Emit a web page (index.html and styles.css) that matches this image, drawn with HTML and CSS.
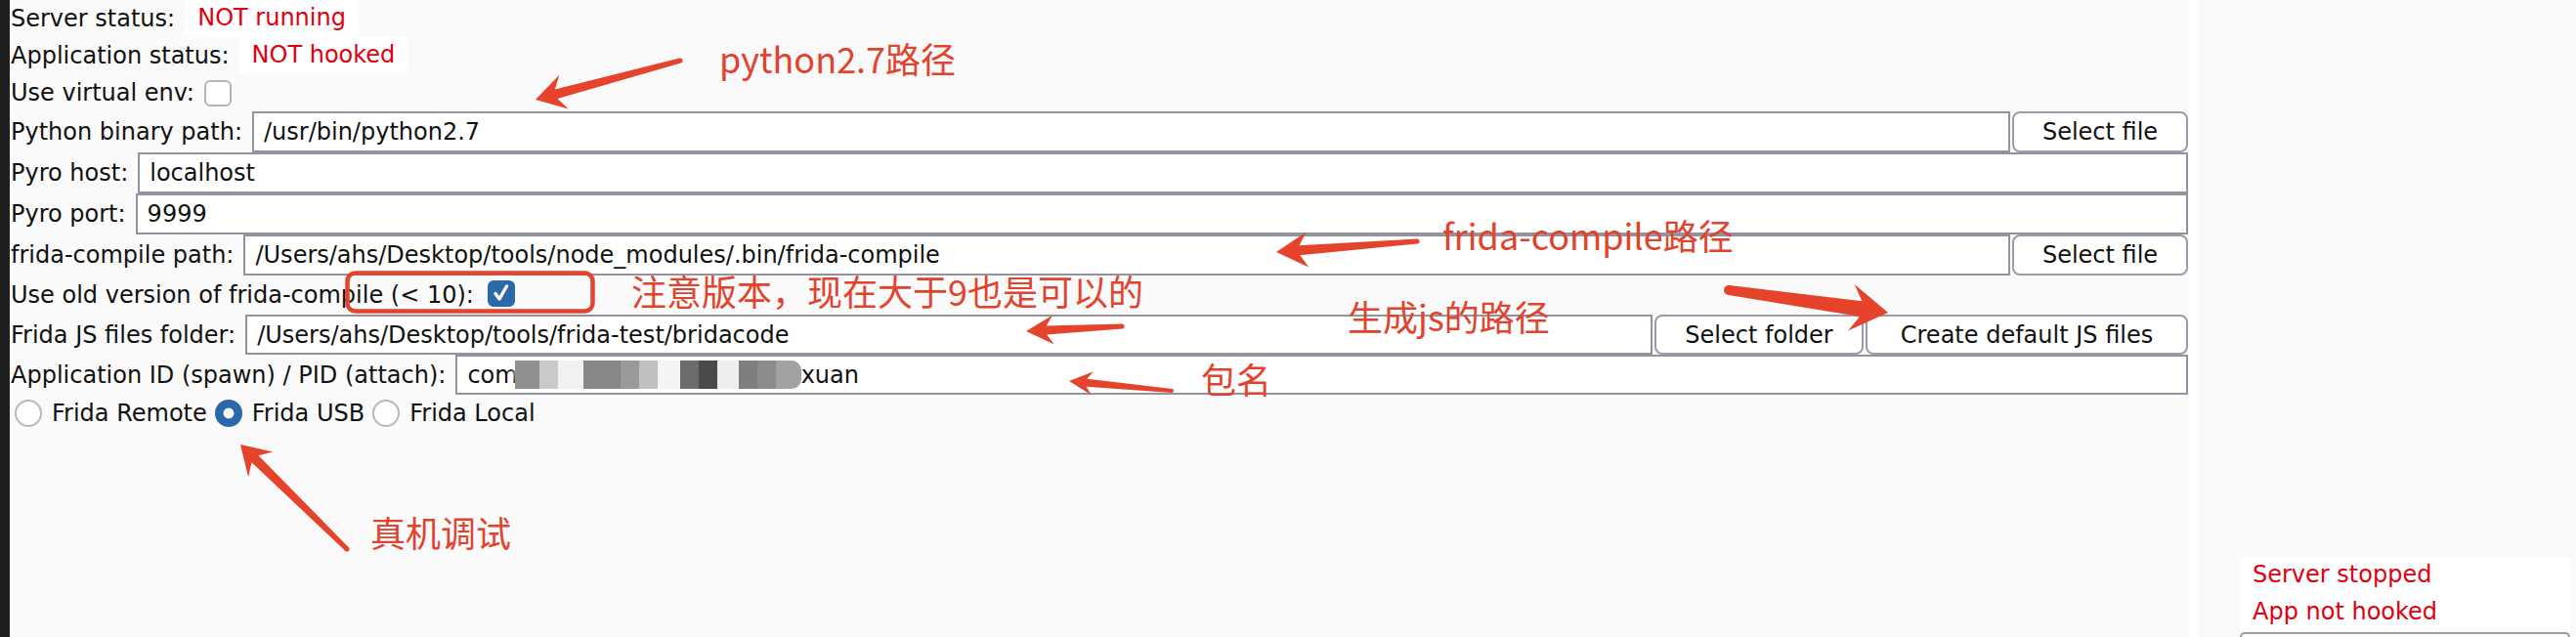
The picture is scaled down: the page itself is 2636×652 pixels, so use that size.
FILE: index.html
```html
<!DOCTYPE html>
<html lang="en">
<head>
<meta charset="utf-8">
<title>Brida configuration</title>
<link rel="stylesheet" href="styles.css">
</head>
<body>
<div class="screen">
  <div class="edge"></div>
  <main class="panel">
    <div class="row r-status"><span class="lbl">Server status:</span><span class="status">NOT running</span></div>
    <div class="row r-status"><span class="lbl">Application status:</span><span class="status">NOT hooked</span></div>
    <div class="row r-check"><span class="lbl">Use virtual env:</span><span class="check"></span></div>
    <div class="row r-field"><span class="lbl">Python binary path:</span>
      <div class="field"><div class="input">/usr/bin/python2.7</div><button class="btn w-file">Select file</button></div></div>
    <div class="row r-field"><span class="lbl">Pyro host:</span>
      <div class="field"><div class="input">localhost</div></div></div>
    <div class="row r-field"><span class="lbl">Pyro port:</span>
      <div class="field"><div class="input">9999</div></div></div>
    <div class="row r-field"><span class="lbl">frida-compile path:</span>
      <div class="field"><div class="input">/Users/ahs/Desktop/tools/node_modules/.bin/frida-compile</div><button class="btn w-file">Select file</button></div></div>
    <div class="row r-check r-old"><span class="lbl">Use old version of frida-compile (&lt; 10):</span><span class="check checked"><svg viewBox="0 0 28 28" width="28" height="28"><path d="M8 14.5 L12 20 L19.5 7" fill="none" stroke="#fff" stroke-width="3.4" stroke-linecap="round" stroke-linejoin="round"/></svg></span></div>
    <div class="row r-field r-short"><span class="lbl">Frida JS files folder:</span>
      <div class="field"><div class="input">/Users/ahs/Desktop/tools/frida-test/bridacode</div><button class="btn w-folder">Select folder</button><button class="btn w-create">Create default JS files</button></div></div>
    <div class="row r-field r-short"><span class="lbl">Application ID (spawn) / PID (attach):</span>
      <div class="field"><div class="input">com<span class="mosaic"><i class="m1"></i><i class="m2"></i><i class="m3"></i><i class="m4"></i><i class="m5"></i><i class="m6"></i><i class="m7"></i><i class="m8"></i><i class="m9"></i><i class="m10"></i><i class="m11"></i><i class="m12"></i><i class="m13"></i></span>xuan</div></div></div>
    <div class="row r-radio">
      <label class="radio"><span class="dot"></span>Frida Remote</label>
      <label class="radio"><span class="dot on"></span>Frida USB</label>
      <label class="radio"><span class="dot"></span>Frida Local</label>
    </div>
  </main>
  <div class="divider"></div>
  <aside class="side">
    <div class="side-status"><div>Server stopped</div><div>App not hooked</div></div>
    <div class="side-btn"></div>
  </aside>

  <svg class="overlay" viewBox="0 0 2636 652" width="2636" height="652">
    <g fill="#e5432b">
      <polygon points="695.35,59.59 567.94,91.43 572.26,76.79 548,102 581.66,111.55 570.54,101.09 696.65,64.41"/>
      <circle cx="696" cy="62" r="2.5"/>
      <polygon points="1449.81,244.51 1329.55,251.18 1336.54,237.61 1306,258 1339.28,273.51 1330.31,261.16 1450.19,249.49"/>
      <circle cx="1450" cy="247" r="2.5"/>
      <polygon points="1147.87,331.5 1070.74,333.44 1077.19,322.59 1050,339 1078.73,352.55 1071.2,342.42 1148.13,336.5"/>
      <circle cx="1148" cy="334" r="2.5"/>
      <polygon points="1768.3,301.95 1903.15,324.01 1891.02,338.46 1932,320 1897.72,290.92 1905.39,308.17 1769.7,292.05"/>
      <circle cx="1769" cy="297" r="5"/>
      <polygon points="1199.19,398.01 1112.3,387.73 1119.03,380.34 1094,390 1116.75,404.22 1111.54,395.69 1198.81,401.99"/>
      <circle cx="1199" cy="400" r="2"/>
      <polygon points="356.75,560.22 264.49,466.14 279.31,462.47 246,455 254.09,488.17 257.49,473.28 353.25,563.78"/>
      <circle cx="355" cy="562" r="2.5"/>
    </g>
    <rect x="355.5" y="279.5" width="251" height="39" rx="8" fill="none" stroke="#e5432b" stroke-width="4.5"/>
  </svg>

  <div class="note n-python">python2.7路径</div>
  <div class="note n-compile">frida-compile路径</div>
  <div class="note n-version">注意版本，现在大于9也是可以的</div>
  <div class="note n-js">生成js的路径</div>
  <div class="note n-pkg">包名</div>
  <div class="note n-usb">真机调试</div>
</div>
</body>
</html>
```

FILE: styles.css
```css
* { box-sizing: border-box; }

html, body {
  margin: 0;
  height: 652px;
  overflow: hidden;
}

body {
  font-family: "DejaVu Sans", "Liberation Sans", sans-serif;
  font-size: 24px;
  color: #111;
  background: #fafafa;
}

.screen {
  position: relative;
  display: flex;
  width: 2636px;
  height: 652px;
  overflow: hidden;
}

.edge {
  flex: none;
  width: 10px;
  background: #1f1f20;
}

.panel {
  flex: none;
  width: 2230px;
  background: #fafafa;
  padding: 0 1px 0 1px;
  display: flex;
  flex-direction: column;
}

.row {
  display: flex;
  align-items: center;
  gap: 10px;
  white-space: nowrap;
}

.lbl { line-height: 28px; }

.r-status {
  height: 38px;
  align-items: flex-start;
}
.r-status .lbl { line-height: 39px; }

.status {
  background: #fff;
  color: #e0000f;
  padding: 0 13px;
  line-height: 37px;
  height: 37px;
}

.r-check { height: 38px; }
.r-old { height: 40px; }

.check {
  width: 28px;
  height: 27px;
  border: 2px solid #b4b4b8;
  border-radius: 6px;
  background: #fff;
  display: flex;
  align-items: center;
  justify-content: center;
}
.check.checked {
  background: #2c69aa;
  border-color: #2c69aa;
  margin-top: -4px;
  margin-left: 4px;
}
.check svg { flex: none; }

.r-field { height: 42px; }
.r-short { height: 41px; }

.field {
  flex: 1;
  align-self: stretch;
  display: flex;
  gap: 2px;
}

.input {
  flex: 1;
  min-width: 0;
  display: flex;
  align-items: center;
  border: 2px solid #9292a0;
  background: #fff;
  padding-left: 10px;
  overflow: hidden;
}

.btn {
  flex: none;
  font: inherit;
  color: #111;
  background: #fff;
  border: 2px solid #9c9baa;
  border-radius: 8px;
  padding: 0;
}
.w-file { width: 180px; }
.w-folder { width: 214px; }
.w-create { width: 330px; }

.mosaic {
  display: inline-flex;
  height: 29px;
  margin-left: -3px;
  box-shadow: 0 -9px 8px 0 rgba(255, 255, 255, 0.95);
}
.mosaic i { display: block; height: 29px; }
.m1 { width: 25px; background: #8f8f8f; }
.m2 { width: 19px; background: #c9c9c9; }
.m3 { width: 26px; background: #f1f1f1; }
.m4 { width: 38px; background: #878787; }
.m5 { width: 19px; background: #9a9a9a; }
.m6 { width: 19px; background: #c0c0c0; }
.m7 { width: 23px; background: #f4f4f4; }
.m8 { width: 19px; background: #6c6c6c; }
.m9 { width: 19px; background: #4a4a4a; }
.m10 { width: 22px; background: #eeeeee; }
.m11 { width: 19px; background: #7f7f7f; }
.m12 { width: 19px; background: #8b8b8b; }
.m13 { width: 26px; background: #a2a2a2; border-radius: 0 10px 10px 0; }

.r-radio {
  height: 38px;
  margin-left: 4px;
  gap: 8px;
}

.radio {
  display: flex;
  align-items: center;
  gap: 10px;
}

.dot {
  width: 28px;
  height: 28px;
  border-radius: 50%;
  border: 2px solid #b9b9bd;
  background: #fff;
}
.dot.on {
  border-color: #2c69aa;
  background: radial-gradient(circle, #fff 0 5px, #2c69aa 5.8px);
}

.divider {
  flex: none;
  width: 10px;
  background: #fff;
}

.side {
  flex: 1;
  background: #f9f9fa;
  padding: 570px 6px 0 42px;
}

.side-status {
  background: #fff;
  color: #e0000f;
  padding-left: 13px;
  line-height: 37.5px;
}

.side-btn {
  margin-top: 2px;
  height: 5px;
  border: 2px solid #9c9baa;
  border-bottom: none;
  border-radius: 10px 10px 0 0;
  background: #fff;
}

.overlay {
  position: absolute;
  left: 0;
  top: 0;
  pointer-events: none;
}

.note {
  position: absolute;
  font-family: "Noto Sans CJK SC", "Noto Sans", sans-serif;
  font-size: 36px;
  line-height: 36px;
  color: #e2432d;
  white-space: nowrap;
}
.n-python { left: 736px; top: 41px; }
.n-compile { left: 1476px; top: 222px; }
.n-version { left: 646px; top: 279px; }
.n-js { left: 1379px; top: 305px; }
.n-pkg { left: 1229px; top: 369px; }
.n-usb { left: 379px; top: 526px; }
```
